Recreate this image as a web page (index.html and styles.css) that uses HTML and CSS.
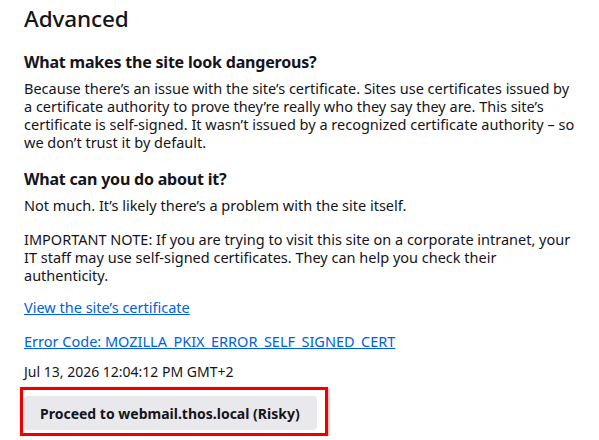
FILE: index.html
```html
<!DOCTYPE html>
<html>
<head>
<meta charset="utf-8">
<link rel="stylesheet" href="styles.css">
</head>
<body>
<div class="page">
  <h1 class="title">Advanced</h1>
  <h2 class="subtitle first">What makes the site look dangerous?</h2>
  <p class="text">Because there’s an issue with the site’s certificate. Sites use certificates issued by a certificate authority to prove they’re really who they say they are. This site’s certificate is self-signed. It wasn’t issued by a recognized certificate authority – so we don’t trust it by default.</p>
  <h2 class="subtitle">What can you do about it?</h2>
  <p class="text">Not much. It’s likely there’s a problem with the site itself.</p>
  <p class="text note">IMPORTANT NOTE: If you are trying to visit this site on a corporate intranet, your IT staff may use self-signed certificates. They can help you check their authenticity.</p>
  <p class="text"><a class="link" href="#">View the site’s certificate</a></p>
  <p class="text code"><a class="link" href="#">Error Code: MOZILLA_PKIX_ERROR_SELF_SIGNED_CERT</a></p>
  <p class="text date">Jul 13, 2026 12:04:12 PM GMT+2</p>
  <div class="highlight">
    <button class="proceed">Proceed to webmail.thos.local (Risky)</button>
  </div>
</div>
</body>
</html>
```
FILE: styles.css
```css
html, body {
  margin: 0;
  background: #ffffff;
}
body {
  font-family: "Noto Sans", "DejaVu Sans", sans-serif;
  color: #15141a;
  font-size: 14.5px;
  line-height: 18px;
}
.page {
  padding: 0 0 0 24px;
  width: 551px;
}
.title {
  margin: 0;
  padding-top: 4px;
  font-size: 22.5px;
  letter-spacing: -0.1px;
  line-height: 30px;
  font-weight: 500;
}
.subtitle {
  margin: 17px 0 6px;
  font-size: 16px;
  letter-spacing: -0.2px;
  line-height: 22px;
  font-weight: 700;
}
.text {
  margin: 0 0 16px;
}
.note {
  margin-bottom: 14px;
}
.code {
  margin-bottom: 13px;
}
.date {
  font-size: 14px;
  margin-bottom: 6px;
}
.link {
  color: #0061e0;
  text-decoration: underline;
}
.highlight {
  display: inline-block;
  margin-left: -4px;
  border: 3px solid #ee0000;
  padding: 6px 8px 3px 1px;
  box-shadow: 1px 1px 3px rgba(0, 0, 0, 0.35);
}
.proceed {
  display: block;
  width: 293px;
  height: 34px;
  border: none;
  border-radius: 4px;
  background: #e9e9ed;
  color: #15141a;
  font-family: "Noto Sans", "DejaVu Sans", sans-serif;
  font-size: 14px;
  font-weight: 700;
  padding: 0 0 0 16px;
  text-align: left;
}
```
